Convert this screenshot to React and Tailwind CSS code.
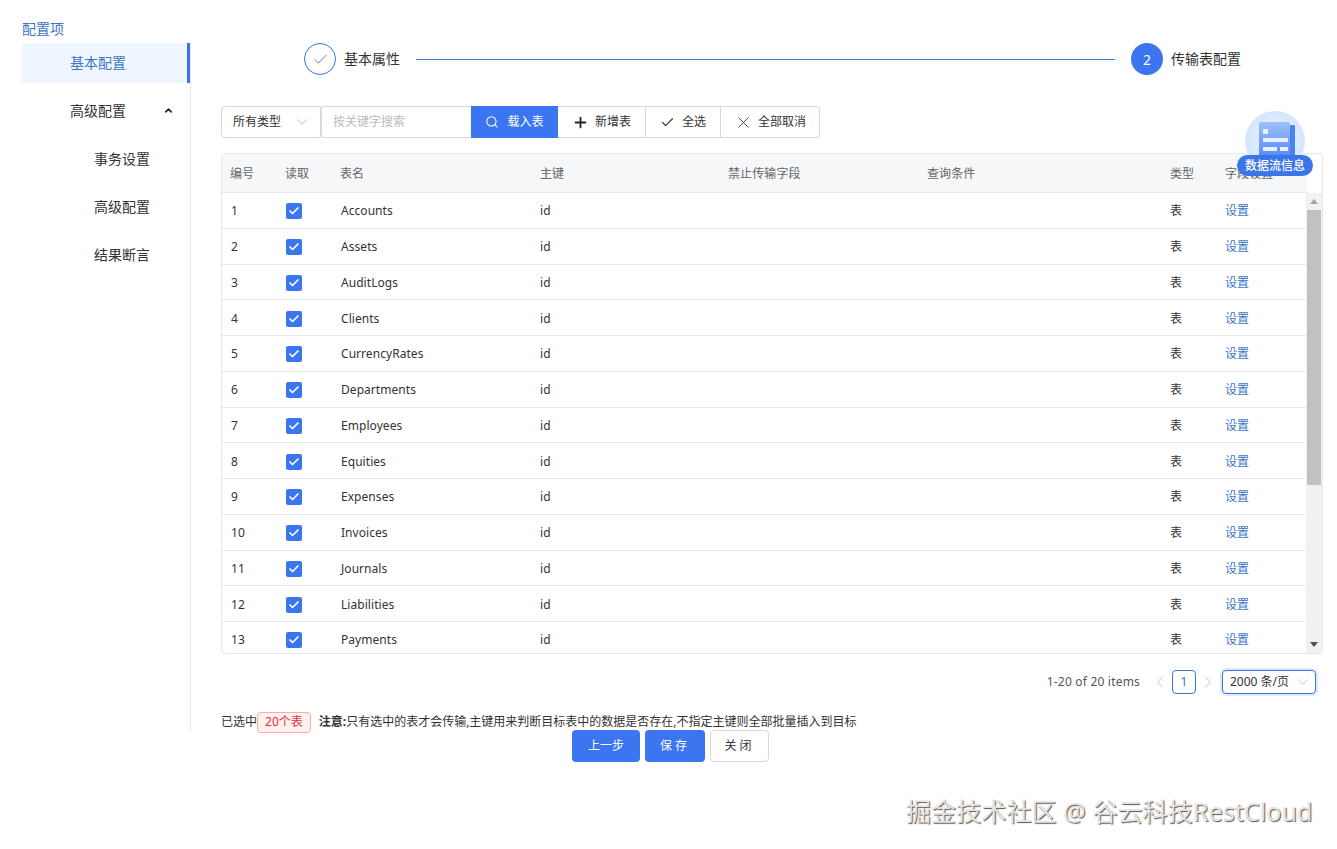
import React from "react";
import { Search, Plus, Check, X, ChevronDown, ChevronUp, ChevronLeft, ChevronRight } from "lucide-react";

const names = ["Accounts","Assets","AuditLogs","Clients","CurrencyRates","Departments","Employees","Equities","Expenses","Invoices","Journals","Liabilities","Payments"];
const font = "font-['Noto_Sans','Noto_Sans_CJK_SC',sans-serif]";

function Row({ i, name }) {
  return (
    <div className="flex items-center h-[35.75px] pt-[2px] shrink-0 border-b border-[#e8e8e8] text-[12px] text-[#333] tracking-[0.05px]">
      <div className="w-[64px] pl-[9px]">{i}</div>
      <div className="w-[55px] flex">
        <span className="w-4 h-4 rounded-[2px] bg-[#3b76f0] flex items-center justify-center">
          <Check size={12} strokeWidth={3.5} className="text-white" />
        </span>
      </div>
      <div className="w-[199px]">{name}</div>
      <div className="w-[188px]">id</div>
      <div className="w-[199px]"></div>
      <div className="w-[243px]"></div>
      <div className="w-[55px]">表</div>
      <div className="text-[#3b76c8]">设置</div>
    </div>
  );
}

function Btn({ icon, children, w, gap, extra = "" }) {
  return (
    <div className={`h-[32px] flex items-center justify-center text-[12px] border-y border-r border-[#d9d9d9] text-[#333] ${w} ${gap} ${extra}`}>
      {icon}
      <span>{children}</span>
    </div>
  );
}

export default function App() {
  return (
    <div className={`relative w-[1337px] h-[849px] overflow-hidden bg-white flex ${font}`}>
      <aside className="ml-[22px] w-[169px] h-[731px] shrink-0 pt-[19px]">
        <div className="text-[14px] leading-[20px] text-[#3b76c8] h-[24px]">配置项</div>
        <div className="border-r border-[#e8e8e8] h-[688px] text-[14px] text-[#333]">
          <div className="h-[40px] pb-[2px] bg-[#f0f6ff] border-r-[3px] border-[#3b76e0] text-[#3b76c8] flex items-center pl-[48px]">基本配置</div>
          <div className="h-[40px] pb-[2px] mt-[8px] flex items-center justify-between pl-[48px] pr-[16px]">
            <span>高级配置</span>
            <ChevronUp size={11} strokeWidth={3.5} className="text-[#222]" />
          </div>
          <div className="h-[40px] pb-[2px] mt-[8px] flex items-center pl-[72px]">事务设置</div>
          <div className="h-[40px] pb-[2px] mt-[8px] flex items-center pl-[72px]">高级配置</div>
          <div className="h-[40px] pb-[2px] mt-[8px] flex items-center pl-[72px]">结果断言</div>
        </div>
      </aside>

      <main className="ml-[30px] w-[1102px] shrink-0">
        <div className="mt-[43px] h-[32px] flex items-center pl-[83px] pr-[82px] text-[14px] text-[#333]">
          <span className="w-[32px] h-[32px] rounded-full border border-[#3b76d8] flex items-center justify-center shrink-0">
            <Check size={17} strokeWidth={1.3} className="text-[#3b76e0]" />
          </span>
          <span className="ml-[8px] pb-[2px]">基本属性</span>
          <div className="flex-1 h-px bg-[#3b7bd0] mx-[16px]"></div>
          <span className="w-[32px] h-[32px] rounded-full bg-[#3b76f0] text-white flex items-center justify-center shrink-0">2</span>
          <span className="ml-[8px] pb-[2px]">传输表配置</span>
        </div>

        <div className="mt-[31px] h-[32px] flex">
          <div className="w-[100px] h-[32px] border border-[#d9d9d9] rounded-l-[4px] rounded-r-[2px] flex items-center justify-between pl-[11px] pr-[9px] text-[12px] text-[#333]">
            <span>所有类型</span>
            <ChevronDown size={18} strokeWidth={0.9} className="text-[#999]" />
          </div>
          <div className="w-[150px] h-[32px] border border-[#d9d9d9] border-r-0 rounded-l-[2px] flex items-center pl-[11px] text-[12px] text-[#bbb]">按关键字搜索</div>
          <div className="w-[87px] h-[32px] bg-[#3b76f0] text-white text-[12px] flex items-center justify-center gap-[8px]">
            <Search size={14} strokeWidth={1.8} />
            <span>载入表</span>
          </div>
          <Btn w="w-[88px]" gap="gap-[6px]" icon={<Plus size={17} strokeWidth={2.5} className="text-[#222]" />}>新增表</Btn>
          <Btn w="w-[75px]" gap="gap-[7px]" icon={<Check size={15} strokeWidth={1.8} />}>全选</Btn>
          <Btn w="w-[99px]" gap="gap-[5px]" extra="rounded-r-[4px]" icon={<X size={19} strokeWidth={1.1} />}>全部取消</Btn>
        </div>

        <div className="mt-[15px] h-[501px] border border-[#e8e8e8] rounded-[4px] flex flex-col overflow-hidden">
          <div className="h-[39px] shrink-0 flex">
            <div className="w-[1085px] pt-[2px] bg-[#f5f7f8] border-b border-[#e8e8e8] flex items-center text-[12px] text-[#666] tracking-[0.1px]">
              <div className="w-[63px] pl-[8px]">编号</div>
              <div className="w-[55px]">读取</div>
              <div className="w-[200px]">表名</div>
              <div className="w-[188px]">主键</div>
              <div className="w-[199px]">禁止传输字段</div>
              <div className="w-[243px]">查询条件</div>
              <div className="w-[55px]">类型</div>
              <div>字段设置</div>
            </div>
          </div>
          <div className="flex-1 min-h-0 flex">
            <div className="w-[1085px] overflow-hidden flex flex-col">
              {names.map((n, idx) => <Row key={n} i={idx + 1} name={n} />)}
            </div>
            <div className="w-[16px] bg-[#f1f1f1] flex flex-col items-center">
              <div className="h-[17px] flex items-center justify-center">
                <span className="w-0 h-0 border-x-[4px] border-x-transparent border-b-[5px] border-b-[#a3a3a3]"></span>
              </div>
              <div className="w-[14px] h-[275px] bg-[#c1c1c1]"></div>
              <div className="flex-1"></div>
              <div className="h-[17px] flex items-center justify-center">
                <span className="w-0 h-0 border-x-[4px] border-x-transparent border-t-[5px] border-t-[#505050]"></span>
              </div>
            </div>
          </div>
        </div>

        <div className="mt-[16px] h-[24px] flex items-center justify-end pr-[7px] text-[12px] text-[#555] tracking-[0.2px]">
          <span>1-20 of 20 items</span>
          <ChevronLeft size={20} strokeWidth={1.1} className="text-[#bbb] ml-[10px]" />
          <span className="ml-[2px] w-[24px] h-[24px] rounded-[4px] border border-[#3b76c8] text-[#3b76c8] flex items-center justify-center">1</span>
          <ChevronRight size={20} strokeWidth={1.1} className="text-[#bbb] ml-[2px]" />
          <div className="ml-[4px] w-[94px] h-[24px] rounded-[4px] border border-[#3b76e0] shadow-[0_0_0_2px_#dfe9fb] flex items-center justify-between pl-[7px] pr-[3px] text-[#333] tracking-normal">
            <span>2000 条/页</span>
            <ChevronDown size={18} strokeWidth={0.9} className="text-[#aaa]" />
          </div>
        </div>

        <div className="mt-[17px] h-[22px] flex items-center text-[12px] text-[#333] whitespace-nowrap">
          <span>已选中</span>
          <span className="h-[21px] px-[7px] flex items-center border border-[#ffa8a8] bg-[#fff1f0] rounded-[4px] text-[#e5303c]">20个表</span>
          <span className="ml-[8px] font-bold">注意:</span>
          <span>只有选中的表才会传输,主键用来判断目标表中的数据是否存在,不指定主键则全部批量插入到目标</span>
        </div>

        <div className="-mt-[3px] h-[32px] flex pl-[351px] gap-[5px] text-[12px]">
          <div className="w-[68px] rounded-[4px] bg-[#3b76f0] text-white flex items-center justify-center">上一步</div>
          <div className="w-[60px] rounded-[4px] bg-[#3b76f0] text-white flex items-center justify-center tracking-[3px]">保存</div>
          <div className="w-[59px] rounded-[4px] border border-[#d9d9d9] text-[#333] flex items-center justify-center tracking-[3px]">关闭</div>
        </div>
      </main>

      <div className="absolute left-[1237px] top-[111px] w-[76px] h-[65px] flex flex-col items-center">
        <svg width="60" height="54" viewBox="0 0 60 54" className="absolute left-[8px] top-0">
          <defs>
            <radialGradient id="bg" cx="0.5" cy="0.5" r="0.6">
              <stop offset="0" stopColor="#f0f6ff" />
              <stop offset="1" stopColor="#cfe2ff" />
            </radialGradient>
            <linearGradient id="doc" x1="0" y1="0" x2="0" y2="1">
              <stop offset="0" stopColor="#9fc1fb" />
              <stop offset="1" stopColor="#4a82f2" />
            </linearGradient>
          </defs>
          <circle cx="30" cy="30" r="30" fill="url(#bg)" />
          <rect x="45" y="14" width="5" height="36" rx="1" fill="#4a82f2" />
          <rect x="14" y="11" width="31" height="40" rx="2" fill="url(#doc)" />
          <rect x="18" y="18" width="5" height="5" fill="#e8f0ff" />
          <rect x="18" y="27" width="25" height="4" fill="#e8f0ff" />
          <rect x="18" y="36" width="14" height="4" fill="#e8f0ff" />
          <rect x="35" y="36" width="8" height="4" fill="#e8f0ff" />
        </svg>
        <div className="absolute left-0 top-[44px] w-[76px] h-[21px] rounded-full bg-[#3b76e8] text-white text-[12px] font-medium flex items-center justify-center whitespace-nowrap">数据流信息</div>
      </div>

      <div className="absolute left-[906px] top-[793px] text-[25px] leading-[36px] tracking-[0.1px] text-[#e4e4e4] whitespace-nowrap [text-shadow:1px_1px_1px_#555]">掘金技术社区 @ 谷云科技RestCloud</div>
    </div>
  );
}
